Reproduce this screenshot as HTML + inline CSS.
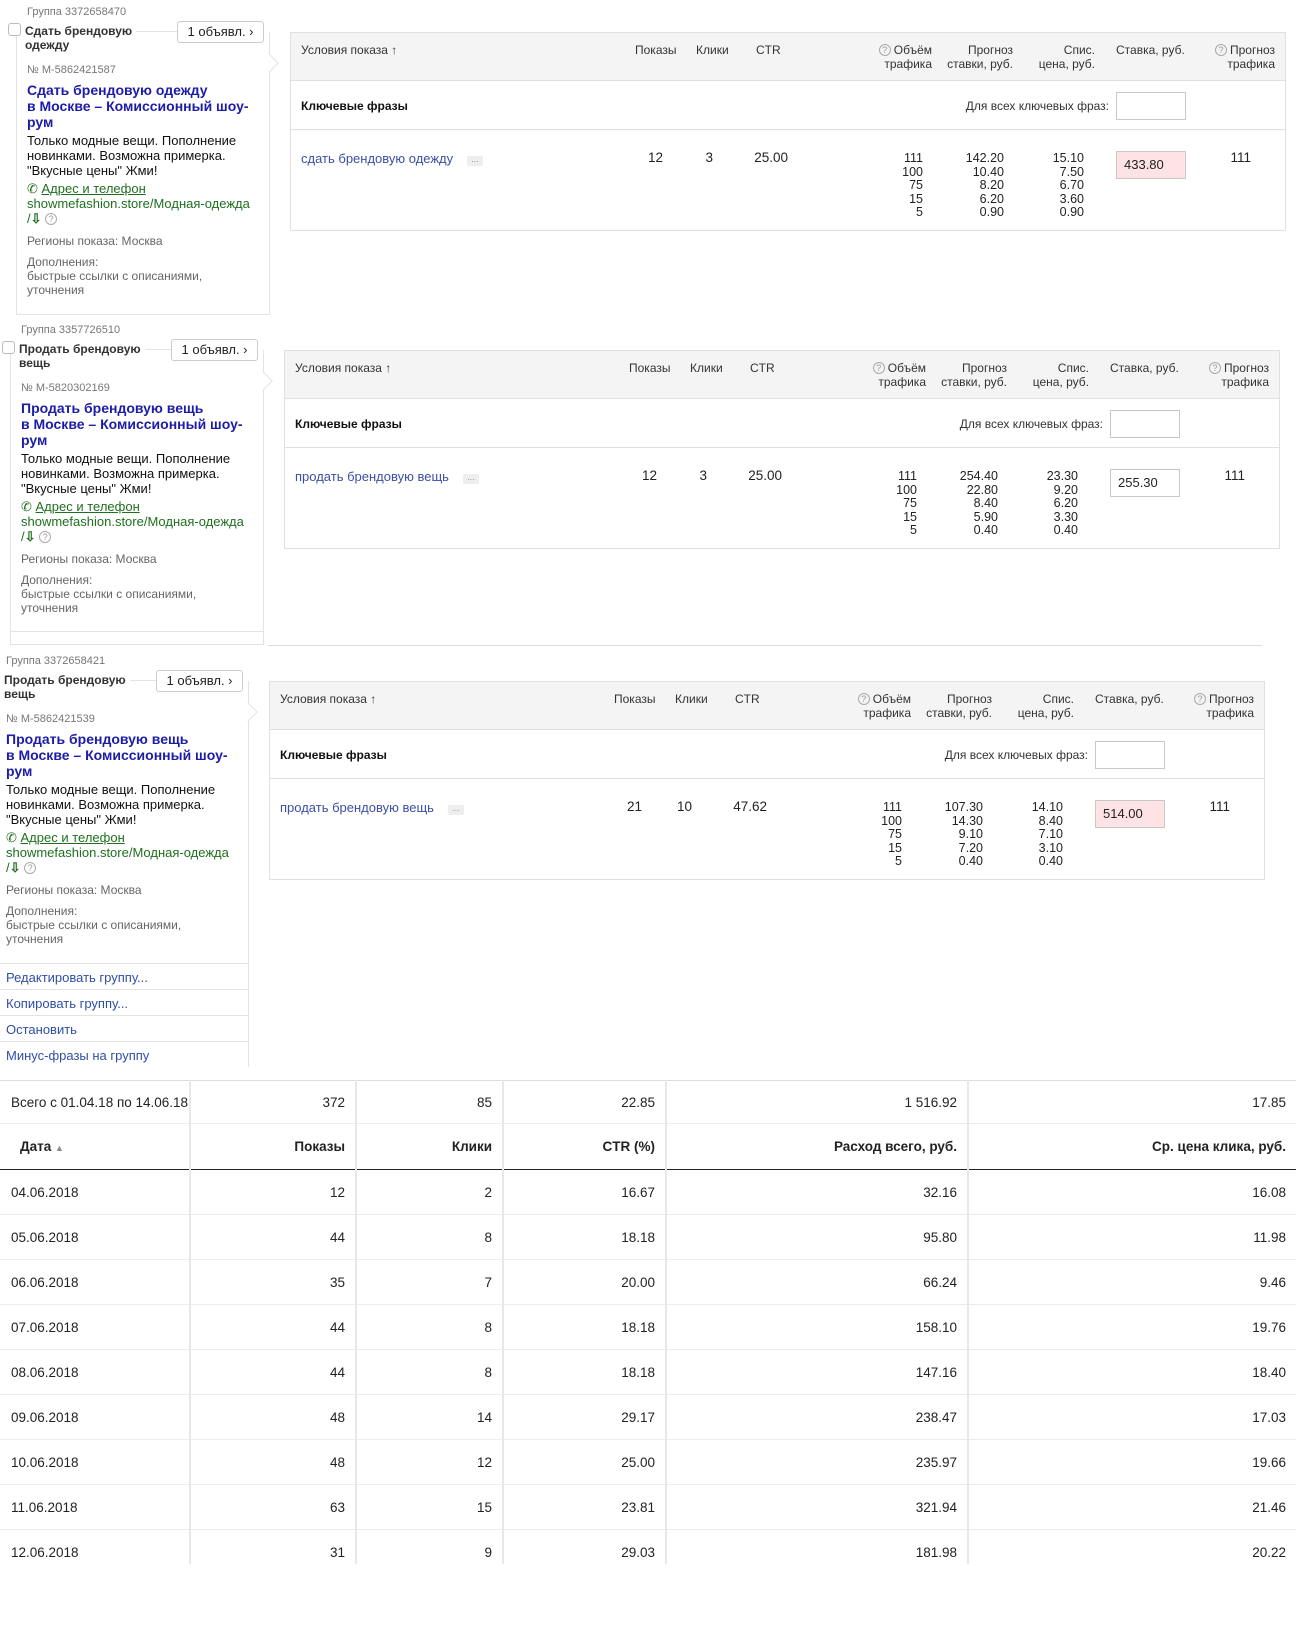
<!DOCTYPE html>
<html><head><meta charset="utf-8"><style>
*{margin:0;padding:0;box-sizing:border-box}
body{width:1316px;height:1648px;position:relative;background:#fff;font-family:"Liberation Sans",Arial,sans-serif;color:#000;overflow:hidden}
.a{position:absolute;white-space:nowrap}
.g{position:absolute;left:0;top:0;width:1316px;height:700px}
.gl{font-size:11px;color:#777}
.cb{width:13px;height:13px;border:1px solid #bbb;border-radius:3px;background:#fff}
.gt{font-size:12px;font-weight:bold;color:#333;line-height:14px;background:#fff;padding-right:4px}
.btn{border:1px solid #ccc;border-radius:3px;font-size:13px;line-height:19px;text-align:center;background:#fff;color:#222}
.card{border:1px solid #e3e3e3;border-top:none;background:#fff}
.nt{position:absolute;width:14px;height:14px;background:#fff;border-top:1px solid #e3e3e3;border-right:1px solid #e3e3e3;transform:rotate(45deg)}
.no{font-size:11px;color:#777}
.ti{font-size:14px;font-weight:bold;color:#1c1ca8;line-height:16px}
.ds{font-size:13px;line-height:15px;color:#111}
.gr{font-size:13px;color:#1f6f1f;line-height:15px}
.gy{font-size:12px;color:#666;line-height:14px}
.tb{position:absolute;border:1px solid #e0e0e0;background:#fff}
.th{position:absolute;left:0;top:0;right:0;height:48px;background:#f4f4f4;border-bottom:1px solid #e0e0e0}
.kr{position:absolute;left:0;top:48px;right:0;height:49px;border-bottom:1px solid #e0e0e0}
.hc{position:absolute;font-size:12px;line-height:14px;color:#333;white-space:nowrap}
.r{text-align:right}
.q{display:inline-block;width:12px;height:12px;border:1px solid #aaa;border-radius:50%;font-size:9px;line-height:10px;text-align:center;color:#999;margin-right:3px;vertical-align:1px}
.vc{position:absolute;font-size:12.5px;line-height:13.5px;color:#222;text-align:right;white-space:nowrap}
.inp{position:absolute;width:70px;height:28px;border:1px solid #c8c8c8;background:#fff;font-size:13px;line-height:26px;padding-left:7px;color:#222}
.pk{background:#fde3e3}
.kw{font-size:13px;color:#3a4fa6}
.dots{display:inline-block;width:16px;height:10px;background:#eee;border-radius:2px;font-size:9px;line-height:6px;color:#999;text-align:center;vertical-align:1px;margin-left:14px}
.lk{font-size:13px;color:#2f4ea8}
table.bt{position:absolute;left:0;top:1080px;width:1296px;border-collapse:collapse;font-size:13.5px;color:#222;table-layout:fixed}
.bt td{height:45px;border-right:2px solid #e8e8e8;border-bottom:1px solid #ececec;text-align:right;padding:0 10px;vertical-align:middle;overflow:hidden;white-space:nowrap}
.bt td:first-child{text-align:left;padding-left:11px}
.bt td:last-child{border-right:none}
.bt tr.s td{height:43px;border-top:1px solid #ddd}
.bt tr.h td{font-weight:bold;border-bottom:1.5px solid #222;height:46px}
.bt tr.h td:first-child{padding-left:20px}
</style></head><body>

<!-- GROUP 1 -->
<div class="g" style="left:0;top:0">
 <div class="a gl" style="left:27px;top:6px">Группа 3372658470</div>
 <div class="a card" style="left:16px;top:32px;width:254px;height:283px"></div>
 <div class="a" style="left:100px;top:31px;width:78px;height:1px;background:#e3e3e3"></div>
 <div class="nt" style="left:262px;top:56px"></div>
 <div class="a cb" style="left:8px;top:23px"></div>
 <div class="a gt" style="left:25px;top:24px">Сдать брендовую<br>одежду</div>
 <div class="a btn" style="left:177px;top:21px;width:87px;height:22px">1 объявл. ›</div>
 <div class="a no" style="left:27px;top:64px">№ M-5862421587</div>
 <div class="a ti" style="left:27px;top:82px">Сдать брендовую одежду<br>в Москве – Комиссионный шоу-<br>рум</div>
 <div class="a ds" style="left:27px;top:133px">Только модные вещи. Пополнение<br>новинками. Возможна примерка.<br>"Вкусные цены" Жми!</div>
 <div class="a gr" style="left:27px;top:181px">✆ <u>Адрес и телефон</u><br>showmefashion.store/Модная-одежда<br>/<b>⇩</b> <span class="q">?</span></div>
 <div class="a gy" style="left:27px;top:234px">Регионы показа: Москва</div>
 <div class="a gy" style="left:27px;top:255px">Дополнения:<br>быстрые ссылки с описаниями,<br>уточнения</div>
</div>

<!-- GROUP 2 -->
<div class="g" style="left:-6px;top:318px">
 <div class="a gl" style="left:27px;top:6px">Группа 3357726510</div>
 <div class="a card" style="left:16px;top:32px;width:254px;height:295px"></div>
 <div class="a" style="left:17px;top:313px;width:252px;height:1px;background:#e3e3e3"></div>
 <div class="a" style="left:100px;top:31px;width:78px;height:1px;background:#e3e3e3"></div>
 <div class="nt" style="left:262px;top:56px"></div>
 <div class="a cb" style="left:8px;top:23px"></div>
 <div class="a gt" style="left:25px;top:24px">Продать брендовую<br>вещь</div>
 <div class="a btn" style="left:177px;top:21px;width:87px;height:22px">1 объявл. ›</div>
 <div class="a no" style="left:27px;top:64px">№ M-5820302169</div>
 <div class="a ti" style="left:27px;top:82px">Продать брендовую вещь<br>в Москве – Комиссионный шоу-<br>рум</div>
 <div class="a ds" style="left:27px;top:133px">Только модные вещи. Пополнение<br>новинками. Возможна примерка.<br>"Вкусные цены" Жми!</div>
 <div class="a gr" style="left:27px;top:181px">✆ <u>Адрес и телефон</u><br>showmefashion.store/Модная-одежда<br>/<b>⇩</b> <span class="q">?</span></div>
 <div class="a gy" style="left:27px;top:234px">Регионы показа: Москва</div>
 <div class="a gy" style="left:27px;top:255px">Дополнения:<br>быстрые ссылки с описаниями,<br>уточнения</div>
</div>
<div class="a" style="left:268px;top:645px;width:994px;height:1px;background:#ddd"></div>
<div class="a" style="left:0;top:646px;width:268px;height:10px;background:#fff"></div>

<!-- GROUP 3 -->
<div class="g" style="left:-21px;top:649px">
 <div class="a gl" style="left:27px;top:6px">Группа 3372658421</div>
 <div class="a card" style="left:16px;top:32px;width:254px;height:387px"></div>
 <div class="a" style="left:100px;top:31px;width:78px;height:1px;background:#e3e3e3"></div>
 <div class="nt" style="left:262px;top:56px"></div>
 <div class="a gt" style="left:25px;top:24px">Продать брендовую<br>вещь</div>
 <div class="a btn" style="left:177px;top:21px;width:87px;height:22px">1 объявл. ›</div>
 <div class="a no" style="left:27px;top:64px">№ M-5862421539</div>
 <div class="a ti" style="left:27px;top:82px">Продать брендовую вещь<br>в Москве – Комиссионный шоу-<br>рум</div>
 <div class="a ds" style="left:27px;top:133px">Только модные вещи. Пополнение<br>новинками. Возможна примерка.<br>"Вкусные цены" Жми!</div>
 <div class="a gr" style="left:27px;top:181px">✆ <u>Адрес и телефон</u><br>showmefashion.store/Модная-одежда<br>/<b>⇩</b> <span class="q">?</span></div>
 <div class="a gy" style="left:27px;top:234px">Регионы показа: Москва</div>
 <div class="a gy" style="left:27px;top:255px">Дополнения:<br>быстрые ссылки с описаниями,<br>уточнения</div>
 <div class="a" style="left:17px;top:314px;width:252px;height:1px;background:#e3e3e3"></div>
 <div class="a lk" style="left:27px;top:321px">Редактировать группу...</div>
 <div class="a" style="left:17px;top:340px;width:252px;height:1px;background:#e3e3e3"></div>
 <div class="a lk" style="left:27px;top:347px">Копировать группу...</div>
 <div class="a" style="left:17px;top:366px;width:252px;height:1px;background:#e3e3e3"></div>
 <div class="a lk" style="left:27px;top:373px">Остановить</div>
 <div class="a" style="left:17px;top:392px;width:252px;height:1px;background:#e3e3e3"></div>
 <div class="a lk" style="left:27px;top:399px">Минус-фразы на группу</div>
</div>
<div class="a" style="left:0;top:1067px;width:260px;height:12px;background:#fff"></div>

<!-- TABLES -->
<div class="tb" style="left:290px;top:32px;width:996px;height:199px">
 <div class="th"></div><div class="kr"></div>
 <div class="hc" style="left:10px;top:10px">Условия показа ↑</div>
 <div class="hc" style="left:344px;top:10px">Показы</div>
 <div class="hc" style="left:405px;top:10px">Клики</div>
 <div class="hc" style="left:465px;top:10px">CTR</div>
 <div class="hc r" style="right:353px;top:10px"><span class="q">?</span>Объём<br>трафика</div>
 <div class="hc r" style="right:272px;top:10px">Прогноз<br>ставки, руб.</div>
 <div class="hc r" style="right:190px;top:10px">Спис.<br>цена, руб.</div>
 <div class="hc" style="left:825px;top:10px">Ставка, руб.</div>
 <div class="hc r" style="right:10px;top:10px"><span class="q">?</span>Прогноз<br>трафика</div>
 <div class="hc" style="left:10px;top:66px;font-weight:bold;color:#111">Ключевые фразы</div>
 <div class="hc r" style="right:176px;top:66px">Для всех ключевых фраз:</div>
 <div class="inp" style="left:825px;top:59px"></div>
 <div class="a kw" style="left:10px;top:118px">сдать брендовую одежду<span class="dots">...</span></div>
 <div class="vc" style="left:330px;width:42px;top:118px;font-size:13.5px">12</div>
 <div class="vc" style="left:400px;width:22px;top:118px;font-size:13.5px">3</div>
 <div class="vc" style="left:450px;width:47px;top:118px;font-size:13.5px">25.00</div>
 <div class="vc" style="left:560px;width:72px;top:119px">111<br>100<br>75<br>15<br>5</div>
 <div class="vc" style="left:640px;width:73px;top:119px">142.20<br>10.40<br>8.20<br>6.20<br>0.90</div>
 <div class="vc" style="left:720px;width:73px;top:119px">15.10<br>7.50<br>6.70<br>3.60<br>0.90</div>
 <div class="inp pk" style="left:825px;top:118px">433.80</div>
 <div class="vc" style="left:930px;width:30px;top:118px;font-size:13.5px">111</div>
</div>

<div class="tb" style="left:284px;top:350px;width:996px;height:199px">
 <div class="th"></div><div class="kr"></div>
 <div class="hc" style="left:10px;top:10px">Условия показа ↑</div>
 <div class="hc" style="left:344px;top:10px">Показы</div>
 <div class="hc" style="left:405px;top:10px">Клики</div>
 <div class="hc" style="left:465px;top:10px">CTR</div>
 <div class="hc r" style="right:353px;top:10px"><span class="q">?</span>Объём<br>трафика</div>
 <div class="hc r" style="right:272px;top:10px">Прогноз<br>ставки, руб.</div>
 <div class="hc r" style="right:190px;top:10px">Спис.<br>цена, руб.</div>
 <div class="hc" style="left:825px;top:10px">Ставка, руб.</div>
 <div class="hc r" style="right:10px;top:10px"><span class="q">?</span>Прогноз<br>трафика</div>
 <div class="hc" style="left:10px;top:66px;font-weight:bold;color:#111">Ключевые фразы</div>
 <div class="hc r" style="right:176px;top:66px">Для всех ключевых фраз:</div>
 <div class="inp" style="left:825px;top:59px"></div>
 <div class="a kw" style="left:10px;top:118px">продать брендовую вещь<span class="dots">...</span></div>
 <div class="vc" style="left:330px;width:42px;top:118px;font-size:13.5px">12</div>
 <div class="vc" style="left:400px;width:22px;top:118px;font-size:13.5px">3</div>
 <div class="vc" style="left:450px;width:47px;top:118px;font-size:13.5px">25.00</div>
 <div class="vc" style="left:560px;width:72px;top:119px">111<br>100<br>75<br>15<br>5</div>
 <div class="vc" style="left:640px;width:73px;top:119px">254.40<br>22.80<br>8.40<br>5.90<br>0.40</div>
 <div class="vc" style="left:720px;width:73px;top:119px">23.30<br>9.20<br>6.20<br>3.30<br>0.40</div>
 <div class="inp" style="left:825px;top:118px">255.30</div>
 <div class="vc" style="left:930px;width:30px;top:118px;font-size:13.5px">111</div>
</div>

<div class="tb" style="left:269px;top:681px;width:996px;height:199px">
 <div class="th"></div><div class="kr"></div>
 <div class="hc" style="left:10px;top:10px">Условия показа ↑</div>
 <div class="hc" style="left:344px;top:10px">Показы</div>
 <div class="hc" style="left:405px;top:10px">Клики</div>
 <div class="hc" style="left:465px;top:10px">CTR</div>
 <div class="hc r" style="right:353px;top:10px"><span class="q">?</span>Объём<br>трафика</div>
 <div class="hc r" style="right:272px;top:10px">Прогноз<br>ставки, руб.</div>
 <div class="hc r" style="right:190px;top:10px">Спис.<br>цена, руб.</div>
 <div class="hc" style="left:825px;top:10px">Ставка, руб.</div>
 <div class="hc r" style="right:10px;top:10px"><span class="q">?</span>Прогноз<br>трафика</div>
 <div class="hc" style="left:10px;top:66px;font-weight:bold;color:#111">Ключевые фразы</div>
 <div class="hc r" style="right:176px;top:66px">Для всех ключевых фраз:</div>
 <div class="inp" style="left:825px;top:59px"></div>
 <div class="a kw" style="left:10px;top:118px">продать брендовую вещь<span class="dots">...</span></div>
 <div class="vc" style="left:330px;width:42px;top:118px;font-size:13.5px">21</div>
 <div class="vc" style="left:400px;width:22px;top:118px;font-size:13.5px">10</div>
 <div class="vc" style="left:450px;width:47px;top:118px;font-size:13.5px">47.62</div>
 <div class="vc" style="left:560px;width:72px;top:119px">111<br>100<br>75<br>15<br>5</div>
 <div class="vc" style="left:640px;width:73px;top:119px">107.30<br>14.30<br>9.10<br>7.20<br>0.40</div>
 <div class="vc" style="left:720px;width:73px;top:119px">14.10<br>8.40<br>7.10<br>3.10<br>0.40</div>
 <div class="inp pk" style="left:825px;top:118px">514.00</div>
 <div class="vc" style="left:930px;width:30px;top:118px;font-size:13.5px">111</div>
</div>

<!-- STATS TABLE -->
<div class="a" style="left:0;top:1080px;width:1296px;height:484px;overflow:hidden">
<table class="bt" style="top:0">
<colgroup><col style="width:190px"><col style="width:166px"><col style="width:147px"><col style="width:163px"><col style="width:302px"><col style="width:328px"></colgroup>
<tr class="s"><td>Всего с 01.04.18 по 14.06.18</td><td>372</td><td>85</td><td>22.85</td><td>1 516.92</td><td>17.85</td></tr>
<tr class="h"><td>Дата <span style="font-size:9px;color:#888">▲</span></td><td>Показы</td><td>Клики</td><td>CTR (%)</td><td>Расход всего, руб.</td><td>Ср. цена клика, руб.</td></tr>
<tr><td>04.06.2018</td><td>12</td><td>2</td><td>16.67</td><td>32.16</td><td>16.08</td></tr>
<tr><td>05.06.2018</td><td>44</td><td>8</td><td>18.18</td><td>95.80</td><td>11.98</td></tr>
<tr><td>06.06.2018</td><td>35</td><td>7</td><td>20.00</td><td>66.24</td><td>9.46</td></tr>
<tr><td>07.06.2018</td><td>44</td><td>8</td><td>18.18</td><td>158.10</td><td>19.76</td></tr>
<tr><td>08.06.2018</td><td>44</td><td>8</td><td>18.18</td><td>147.16</td><td>18.40</td></tr>
<tr><td>09.06.2018</td><td>48</td><td>14</td><td>29.17</td><td>238.47</td><td>17.03</td></tr>
<tr><td>10.06.2018</td><td>48</td><td>12</td><td>25.00</td><td>235.97</td><td>19.66</td></tr>
<tr><td>11.06.2018</td><td>63</td><td>15</td><td>23.81</td><td>321.94</td><td>21.46</td></tr>
<tr><td>12.06.2018</td><td>31</td><td>9</td><td>29.03</td><td>181.98</td><td>20.22</td></tr>
</table>
</div>
</body></html>
